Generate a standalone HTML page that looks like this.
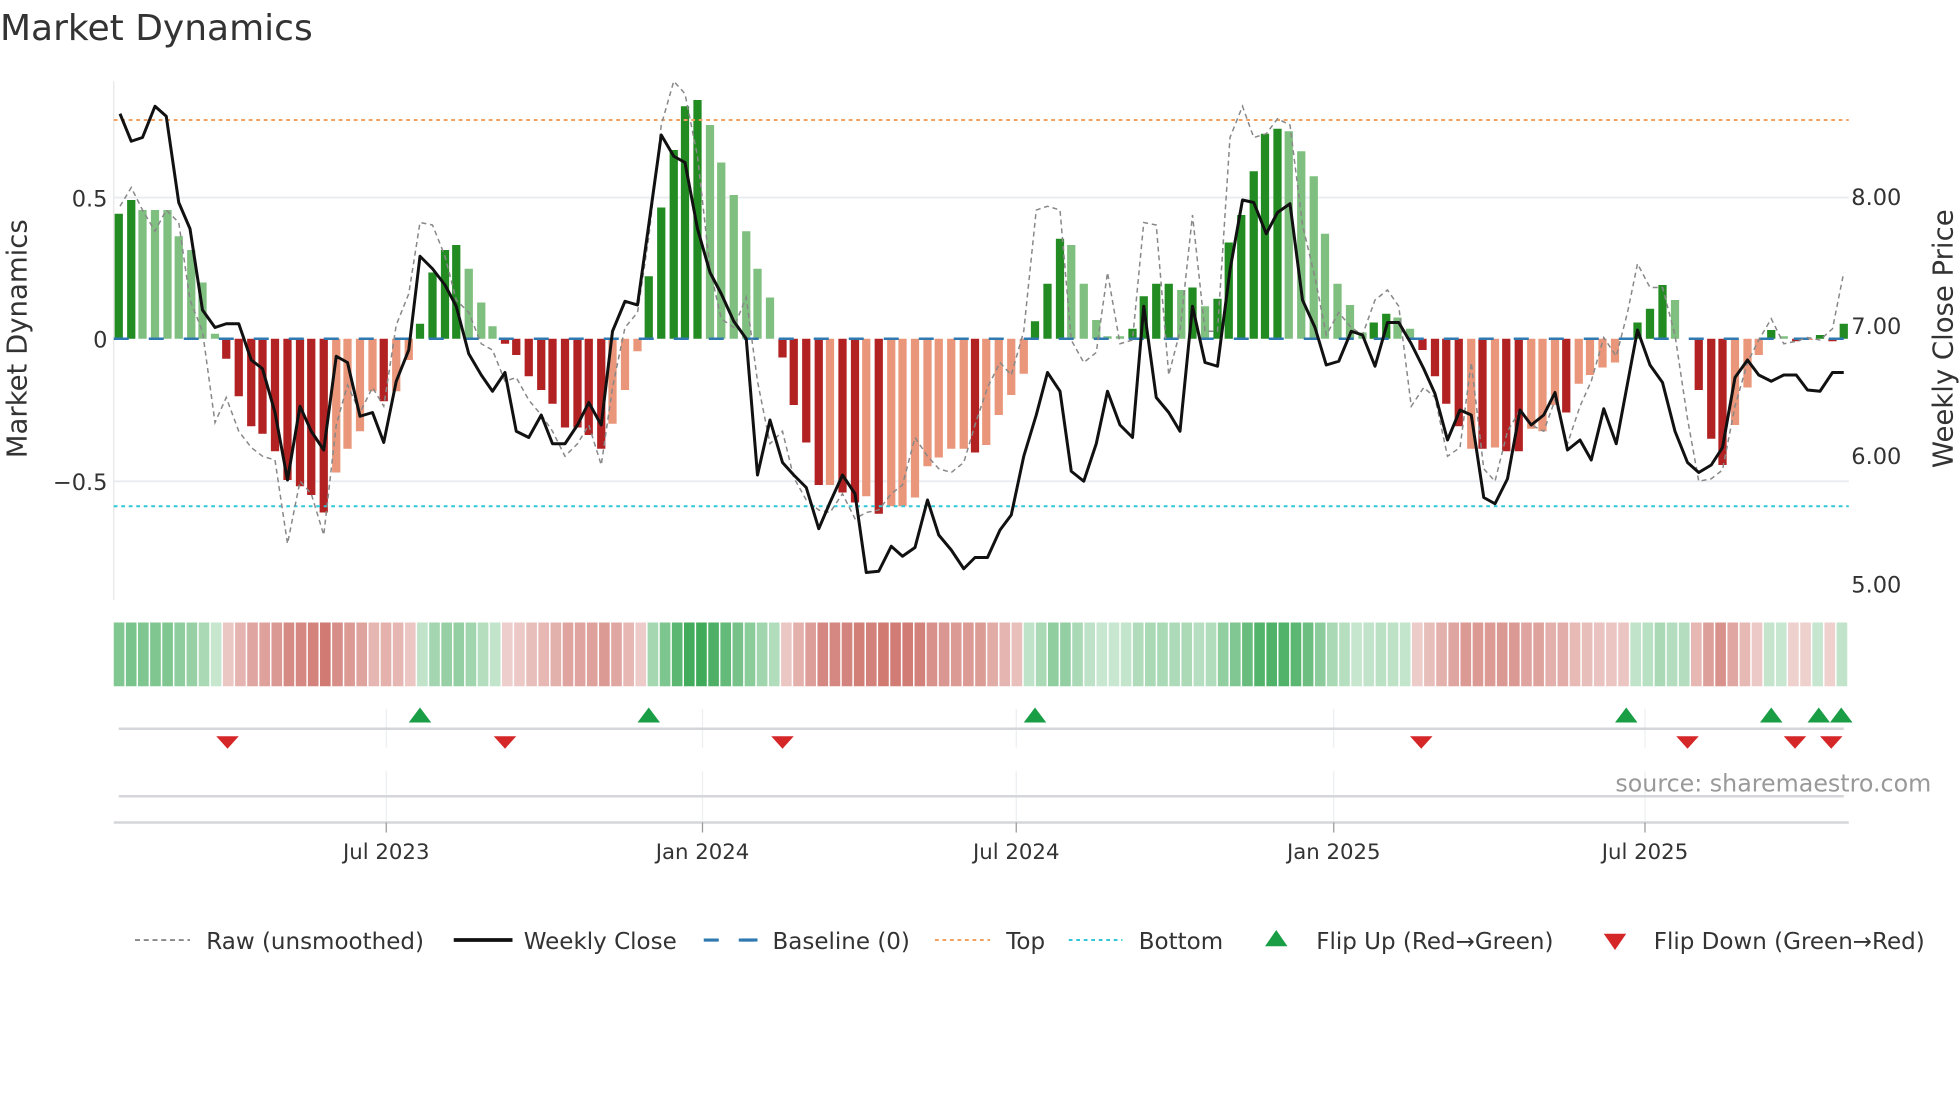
<!DOCTYPE html>
<html><head><meta charset="utf-8"><style>
html,body{margin:0;padding:0;background:#fff;}
svg{display:block;font-family:"DejaVu Sans","Liberation Sans",sans-serif;}
</style></head><body>
<svg id="s" width="1960" height="1102" viewBox="0 0 1568 881.6" xmlns="http://www.w3.org/2000/svg">
<rect width="1568" height="882" fill="#fff"/>
<text x="0" y="32" font-size="28.8" fill="#333">Market Dynamics</text>
<line x1="91" y1="158" x2="1479" y2="158" stroke="#e8ecf0" stroke-width="1.5"/>
<line x1="91" y1="385" x2="1479" y2="385" stroke="#e8ecf0" stroke-width="1.5"/>
<line x1="91" y1="65" x2="91" y2="480" stroke="#e6e6e6" stroke-width="1"/>
<g id="bars"></g>
<line x1="91" y1="96" x2="1479" y2="96" stroke="#f0a060" stroke-width="1.6" stroke-dasharray="3,3"/>
<line x1="91" y1="405" x2="1479" y2="405" stroke="#30c8d8" stroke-width="1.6" stroke-dasharray="3,3"/>
<line x1="91" y1="271" x2="1479" y2="271" stroke="#2f78b0" stroke-width="2" stroke-dasharray="12,16"/>
<polyline id="raw" fill="none" stroke="#888" stroke-width="1.2" stroke-dasharray="4,3"/>
<polyline id="close" fill="none" stroke="#111" stroke-width="2.4" stroke-linejoin="round"/>
<g font-size="18" fill="#333">
<text x="86" y="165" text-anchor="end">0.5</text>
<text x="86" y="278" text-anchor="end">0</text>
<text x="86" y="392" text-anchor="end">−0.5</text>
<text x="1481" y="164">8.00</text>
<text x="1481" y="267">7.00</text>
<text x="1481" y="371">6.00</text>
<text x="1481" y="474">5.00</text>
</g>
<text transform="translate(21,271) rotate(-90)" text-anchor="middle" font-size="22" fill="#333">Market Dynamics</text>
<text transform="translate(1562,271) rotate(-90)" text-anchor="middle" font-size="22" fill="#333">Weekly Close Price</text>
<g id="heat"></g>
<g stroke="#eceff2" stroke-width="1">
<line x1="309" y1="567" x2="309" y2="598"/><line x1="562" y1="567" x2="562" y2="598"/><line x1="813" y1="567" x2="813" y2="598"/><line x1="1067" y1="567" x2="1067" y2="598"/><line x1="1316" y1="567" x2="1316" y2="598"/>
<line x1="309" y1="617" x2="309" y2="660"/><line x1="562" y1="617" x2="562" y2="660"/><line x1="813" y1="617" x2="813" y2="660"/><line x1="1067" y1="617" x2="1067" y2="660"/><line x1="1316" y1="617" x2="1316" y2="660"/>
</g>
<line x1="95" y1="583" x2="1475" y2="583" stroke="#d4d6d9" stroke-width="2"/>
<line x1="95" y1="637" x2="1475" y2="637" stroke="#d4d6d9" stroke-width="2"/>
<line x1="91" y1="658" x2="1479" y2="658" stroke="#d4d6d9" stroke-width="2"/>
<g stroke="#999" stroke-width="1"><line x1="309" y1="658" x2="309" y2="666"/><line x1="562" y1="658" x2="562" y2="666"/><line x1="813" y1="658" x2="813" y2="666"/><line x1="1067" y1="658" x2="1067" y2="666"/><line x1="1316" y1="658" x2="1316" y2="666"/></g>
<g id="flips"></g>
<text x="1545" y="633" text-anchor="end" font-size="19" fill="#999">source: sharemaestro.com</text>
<g font-size="17" fill="#333" text-anchor="middle">
<text x="309" y="687">Jul 2023</text><text x="562" y="687">Jan 2024</text><text x="813" y="687">Jul 2024</text><text x="1067" y="687">Jan 2025</text><text x="1316" y="687">Jul 2025</text>
</g>
<g font-size="18.4" fill="#333">
<line x1="108" y1="752" x2="152" y2="752" stroke="#888" stroke-width="1.5" stroke-dasharray="4,3"/>
<text x="165" y="759">Raw (unsmoothed)</text>
<line x1="363" y1="752" x2="410" y2="752" stroke="#111" stroke-width="3"/>
<text x="419" y="759">Weekly Close</text>
<line x1="563" y1="752" x2="606" y2="752" stroke="#2f78b0" stroke-width="2.5" stroke-dasharray="12,16"/>
<line x1="594" y1="752" x2="606" y2="752" stroke="#2f78b0" stroke-width="2.5"/>
<text x="618" y="759">Baseline (0)</text>
<line x1="748" y1="752" x2="792" y2="752" stroke="#f0a060" stroke-width="1.6" stroke-dasharray="3,3"/>
<text x="805" y="759">Top</text>
<line x1="855" y1="752" x2="898" y2="752" stroke="#30c8d8" stroke-width="1.6" stroke-dasharray="3,3"/>
<text x="911" y="759">Bottom</text>
<polygon points="1021,744 1030,757 1012,757" fill="#1a9e45"/>
<text x="1053" y="759">Flip Up (Red→Green)</text>
<polygon points="1283,747 1301,747 1292,760" fill="#d62728"/>
<text x="1323" y="759">Flip Down (Green→Red)</text>
</g>
</svg>
<script>
var NS="http://www.w3.org/2000/svg";
function el(p,t,a){var e=document.createElementNS(NS,t);for(var k in a)e.setAttribute(k,a[k]);p.appendChild(e);return e;}
var B=[[95,171,0],[105,160,0],[114,168,1],[124,168,1],[134,168,1],[143,189,1],[153,200,1],[162,226,1],[172,267,1],
[181,287,2],[191,317,2],[201,341,2],[210,347,2],[220,361,2],[230,384,2],[240,389,2],[249,396,2],[259,410,2],[269,378,3],[278,359,3],[288,345,3],[298,313,3],[307,321,2],[317,313,3],[327,288,3],
[336,259,0],[346,218,0],[356,200,0],[365,196,0],[375,215,1],[385,242,1],[394,261,1],
[404,275,2],[413,284,2],[423,301,2],[433,312,2],[442,323,2],[452,342,2],[462,342,2],[471,348,2],[481,359,2],[490,339,3],[500,312,3],[510,281,3],
[519,221,0],[529,166,0],[539,120,0],[548,85,0],[558,80,0],[568,100,1],[577,130,1],[587,156,1],[597,185,1],[606,215,1],[616,238,1],
[626,286,2],[635,324,2],[645,354,2],[655,388,2],[664,388,3],[674,394,2],[684,402,2],[693,397,3],[703,411,2],[713,405,3],[722,405,3],[732,398,3],[742,373,3],[751,366,3],[761,359,3],[771,359,3],[780,362,2],[789,356,3],[799,332,3],[809,316,3],[819,299,3],
[828,257,0],[838,227,0],[848,191,0],[857,196,1],[867,227,1],[877,256,1],[886,269,1],[896,269,1],[906,263,0],[915,237,0],[925,227,0],[935,227,0],[945,232,1],[954,230,0],[964,245,1],[974,239,0],[983,194,0],[993,172,0],[1003,137,0],[1012,107,0],[1022,103,0],[1031,105,1],[1041,121,1],[1051,141,1],[1060,187,1],[1070,227,1],[1080,244,1],[1090,266,1],[1099,258,0],[1109,251,0],[1118,254,1],[1128,263,1],
[1138,280,2],[1148,301,2],[1157,323,2],[1167,341,2],[1177,359,3],[1186,359,2],[1196,358,3],[1205,361,2],[1215,361,2],[1225,343,3],[1234,345,3],[1244,324,3],[1253,330,2],[1263,307,3],[1272,300,3],[1282,294,3],[1292,290,3],
[1310,258,0],[1320,247,0],[1330,228,0],[1340,240,1],
[1359,312,2],[1369,351,2],[1378,372,2],[1388,340,3],[1398,310,3],[1407,284,3],[1417,264,0],[1427,269,1],[1437,273,2],[1447,272,3],[1456,268,0],[1466,273,2],[1475,259,0]];
var cols=["#228b22","#7fbf7f","#b22222","#e9967a"];
var g=document.getElementById("bars"),h=document.getElementById("heat");
B.forEach(function(b,i){var y0=271,y=b[1],t=Math.min(y,y0),hh=Math.max(Math.abs(y-y0),1);
el(g,"rect",{x:b[0]-3.3,y:t,width:6.6,height:hh,fill:cols[b[2]]});
});
var N=143,w=(1479-91)/N;
for(var i=0;i<N;i++){var cx=91+w*(i+0.5),best=B[0],bd=1e9;B.forEach(function(b){var d=Math.abs(b[0]-cx);if(d<bd){bd=d;best=b;}});
var v=(271-best[1])/227,a=0.25+0.65*Math.min(Math.abs(v)/0.85,1);
var c=v>=0?"rgba(40,160,70,"+a+")":"rgba(190,70,60,"+a+")";
el(h,"rect",{x:91+w*i,y:498,width:w-1.2,height:51,fill:c});}
var close=[[96,91],[105,113],[114,110],[124,85],[133,93],[143,162],[152,183],[162,248],[172,262],[181,259],[191,259],[201,288],[210,295],[220,330],[230,384],[240,325],[249,345],[259,360],[269,285],[278,290],[288,333],[298,330],[307,354],[317,305],[327,280],[336,205],[346,215],[356,228],[365,245],[375,283],[385,300],[394,313],[404,298],[413,345],[423,350],[433,332],[442,355],[452,355],[462,340],[471,322],[481,340],[490,265],[500,241],[510,244],[519,180],[529,108],[539,125],[548,130],[558,183],[568,218],[577,235],[587,257],[597,271],[606,380],[616,336],[626,370],[635,380],[645,390],[655,423],[664,402],[674,380],[684,395],[693,458],[703,457],[713,437],[722,445],[732,438],[742,400],[751,428],[761,440],[771,455],[780,446],[790,446],[800,424],[809,412],[819,365],[829,332],[838,298],[848,313],[857,377],[867,385],[877,355],[886,313],[896,340],[906,350],[915,245],[925,318],[935,330],[944,345],[954,245],[964,290],[974,293],[984,216],[994,160],[1003,162],[1013,187],[1022,170],[1032,163],[1042,240],[1052,262],[1061,292],[1071,289],[1081,265],[1090,268],[1100,293],[1110,258],[1119,258],[1129,275],[1139,295],[1148,315],[1158,352],[1168,328],[1177,332],[1187,398],[1196,403],[1206,383],[1216,328],[1225,340],[1235,332],[1244,314],[1254,360],[1264,352],[1273,368],[1283,327],[1293,355],[1310,264],[1320,292],[1330,306],[1340,345],[1350,370],[1359,378],[1369,372],[1378,358],[1388,302],[1398,288],[1407,300],[1417,305],[1427,300],[1437,300],[1446,312],[1456,313],[1466,298],[1475,298]];
var raw=[[96,165],[105,150],[114,168],[124,185],[133,168],[143,178],[152,240],[162,265],[172,338],[181,318],[191,345],[201,358],[210,365],[220,368],[230,435],[240,385],[249,395],[259,428],[269,340],[278,308],[288,330],[298,310],[307,325],[317,260],[327,235],[336,178],[346,180],[356,205],[365,240],[375,250],[385,275],[394,280],[404,305],[413,302],[423,320],[433,332],[442,345],[452,365],[462,355],[471,340],[481,372],[490,310],[500,262],[510,250],[519,190],[529,100],[539,65],[548,75],[558,125],[568,215],[577,255],[587,262],[597,238],[606,305],[616,355],[626,345],[635,382],[645,400],[655,408],[664,410],[674,395],[684,415],[693,410],[703,408],[713,395],[722,388],[732,350],[742,365],[751,375],[761,378],[771,370],[780,340],[790,310],[800,290],[809,300],[819,265],[829,168],[838,165],[848,168],[857,272],[867,290],[877,282],[886,218],[896,275],[906,272],[915,178],[925,180],[935,300],[944,265],[954,172],[964,265],[974,265],[984,110],[994,85],[1003,110],[1013,107],[1022,95],[1032,100],[1042,180],[1052,222],[1061,268],[1071,250],[1081,262],[1090,268],[1100,240],[1110,232],[1119,245],[1129,325],[1139,310],[1148,318],[1158,365],[1168,358],[1177,290],[1187,375],[1196,385],[1206,345],[1216,328],[1225,340],[1235,345],[1244,320],[1254,355],[1264,325],[1273,305],[1283,270],[1293,285],[1302,250],[1310,211],[1320,230],[1330,230],[1340,268],[1350,335],[1359,385],[1369,383],[1378,376],[1388,325],[1398,290],[1407,272],[1417,255],[1427,275],[1437,273],[1446,270],[1456,272],[1466,263],[1475,218]];
document.getElementById("close").setAttribute("points",close.map(function(p){return p.join(",")}).join(" "));
document.getElementById("raw").setAttribute("points",raw.map(function(p){return p.join(",")}).join(" "));
var f=document.getElementById("flips");
[336,519,828,1301,1417,1455,1473].forEach(function(x){el(f,"polygon",{points:(x)+",566 "+(x+9)+",578 "+(x-9)+",578",fill:"#1a9e45"});});
[182,404,626,1137,1350,1436,1465].forEach(function(x){el(f,"polygon",{points:(x-9)+",589 "+(x+9)+",589 "+x+",599",fill:"#d62728"});});
</script>
</body></html>
